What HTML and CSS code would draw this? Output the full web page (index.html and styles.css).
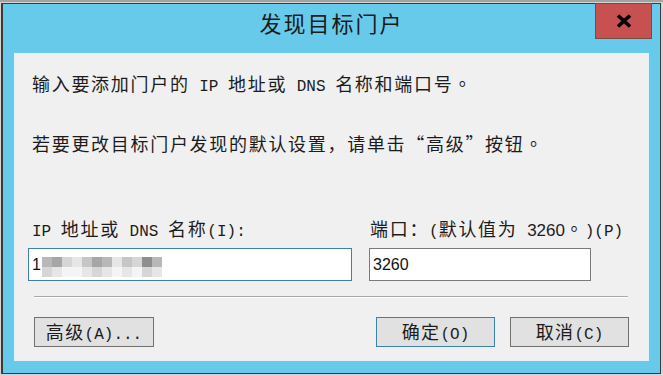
FILE: index.html
```html
<!DOCTYPE html>
<html lang="zh-CN">
<head>
<meta charset="utf-8">
<title>发现目标门户</title>
<link rel="stylesheet" href="styles.css">
</head>
<body>
<div class="win">
  <div class="titlebar">
    <div class="title">发现目标门户</div>
    <div class="close">
      <svg width="16" height="14" viewBox="0 0 16 14"><path d="M2 1.5 L14 12.5 M14 1.5 L2 12.5" stroke="#000" stroke-width="3.6" stroke-linecap="butt"/></svg>
    </div>
  </div>
  <div class="panel">
    <p class="line l1">输入要添加门户的<span class="lat"> IP </span>地址或<span class="lat"> DNS </span>名称和端口号<span class="tc" lang="zh-TW">。</span></p>
    <p class="line l2">若要更改目标门户发现的默认设置，请单击“高级”按钮<span class="tc" lang="zh-TW">。</span></p>
    <div class="fields">
      <div class="col ipcol">
        <div class="lbl iplbl"><span class="lat">IP </span>地址或<span class="lat"> DNS </span>名称<span class="lat">(I):</span></div>
        <div class="input focus">
          <span class="val">1</span>
          <div class="mosaic">
            <i class="g3"></i><i class="g2"></i><i class="g5"></i><i class="g6"></i><i class="g4"></i><i class="g2"></i><i class="g3"></i><i class="g6"></i><i class="g4"></i><i class="g5"></i><i class="g1"></i><i class="g3"></i>
            <i class="g5"></i><i class="g6"></i><i class="g7"></i><i class="g7"></i><i class="g6"></i><i class="g5"></i><i class="g6"></i><i class="g7"></i><i class="g6"></i><i class="g7"></i><i class="g5"></i><i class="g6"></i>
          </div>
        </div>
      </div>
      <div class="col portcol">
        <div class="lbl portlbl">端口：<span class="lat">(</span>默认值为<span class="lat"> </span><span class="num">3260</span><span class="tc" lang="zh-TW">。</span><span class="lat">)(P)</span></div>
        <div class="input plain"><span class="val">3260</span></div>
      </div>
    </div>
    <div class="sep"></div>
    <div class="buttons">
      <button class="btn adv">高级<span class="lat">(A)...</span></button>
      <div class="spacer"></div>
      <button class="btn ok">确定<span class="lat">(O)</span></button>
      <button class="btn cancel">取消<span class="lat">(C)</span></button>
    </div>
  </div>
</div>
</body>
</html>
```
FILE: styles.css
```css
html, body {
  margin: 0;
  padding: 0;
}
body {
  width: 663px;
  height: 376px;
  background: #d4d4d4;
  border-top: 2px solid #a2a2a2;
  box-sizing: border-box;
  overflow: hidden;
  font-family: "Noto Sans CJK SC", "Noto Sans", sans-serif;
  color: #1c1c1c;
}
.win {
  box-sizing: border-box;
  margin: 1px 0 0 1px;
  width: 660px;
  height: 371px;
  border: 1px solid #3a3a3a;
  border-left-width: 2px;
  background: #67caea;
  display: flex;
  flex-direction: column;
}
.titlebar {
  height: 49px;
  display: grid;
  grid-template-columns: 1fr auto 1fr;
  flex: none;
}
.title {
  grid-column: 2;
  font-size: 22px;
  letter-spacing: 2px;
  line-height: 28px;
  margin-top: 4px;
  color: #1a1a1a;
}
.close {
  grid-column: 3;
  justify-self: end;
  box-sizing: border-box;
  width: 57px;
  height: 36px;
  margin-top: -1px;
  margin-right: 8px;
  background: #c75050;
  border: 1px solid #7c4a46;
  display: flex;
  align-items: center;
  justify-content: center;
}
.close svg {
  display: block;
}
.panel {
  flex: 1;
  margin: 0 11px 12px 11px;
  border: 1px solid #e4f2f8;
  background: #f0f0f0;
  font-size: 18px;
  letter-spacing: 1.7px;
}
.line {
  margin: 0;
  height: 24px;
  line-height: 24px;
  padding-left: 17px;
  white-space: nowrap;
}
.l1 { margin-top: 17px; }
.l2 { margin-top: 36px; }
.lat {
  font-family: "Liberation Mono", monospace;
  font-size: 16px;
  letter-spacing: 0;
  white-space: pre;
}
.tc {
  font-family: "Noto Sans CJK TC", sans-serif;
}
.num {
  font-family: "Liberation Sans", sans-serif;
  font-size: 17px;
  letter-spacing: 0;
}
.fields {
  margin-top: 61px;
  padding-left: 13px;
  display: flex;
  gap: 17px;
}
.col {
  display: flex;
  flex-direction: column;
}
.ipcol { width: 324px; }
.portcol { width: 222px; }
.lbl {
  height: 24px;
  line-height: 24px;
  white-space: nowrap;
}
.iplbl { margin-left: 4px; }
.portlbl { margin-left: 1px; }
.input {
  box-sizing: border-box;
  margin-top: 8px;
  height: 33px;
  background: #fff;
  display: flex;
  align-items: center;
  padding-left: 3px;
}
.focus { border: 1px solid #3c7fb1; }
.plain { border: 1px solid #7a7a7a; }
.val {
  font-family: "Liberation Sans", sans-serif;
  font-size: 16px;
  letter-spacing: 0;
  color: #111;
}
.mosaic {
  display: grid;
  grid-template-columns: repeat(12, 10px);
  grid-template-rows: 10px 10px;
  margin-left: 1px;
  margin-top: 4px;
}
.mosaic i { display: block; }
.g1 { background: #8e8e8e; }
.g2 { background: #a6a6a6; }
.g3 { background: #b8b8b8; }
.g4 { background: #c6c6c6; }
.g5 { background: #d6d6d6; }
.g6 { background: #e6e6e6; }
.g7 { background: #f4f4f4; }
.sep {
  margin: 15px 20px 0 19px;
  border-top: 1px solid #a9a9a9;
  border-bottom: 1px solid #ffffff;
}
.buttons {
  margin-top: 19px;
  padding-left: 19px;
  display: flex;
  gap: 15px;
}
.spacer { width: 192px; }
.btn {
  box-sizing: border-box;
  height: 30px;
  width: 119px;
  padding: 0;
  background: #e1e1e1;
  border: 1px solid #707070;
  font-family: "Noto Sans CJK SC", sans-serif;
  font-size: 18px;
  letter-spacing: 1.4px;
  color: #1c1c1c;
  line-height: 26px;
}
.adv { width: 120px; }
.ok { border-color: #3c7fb1; }
```
